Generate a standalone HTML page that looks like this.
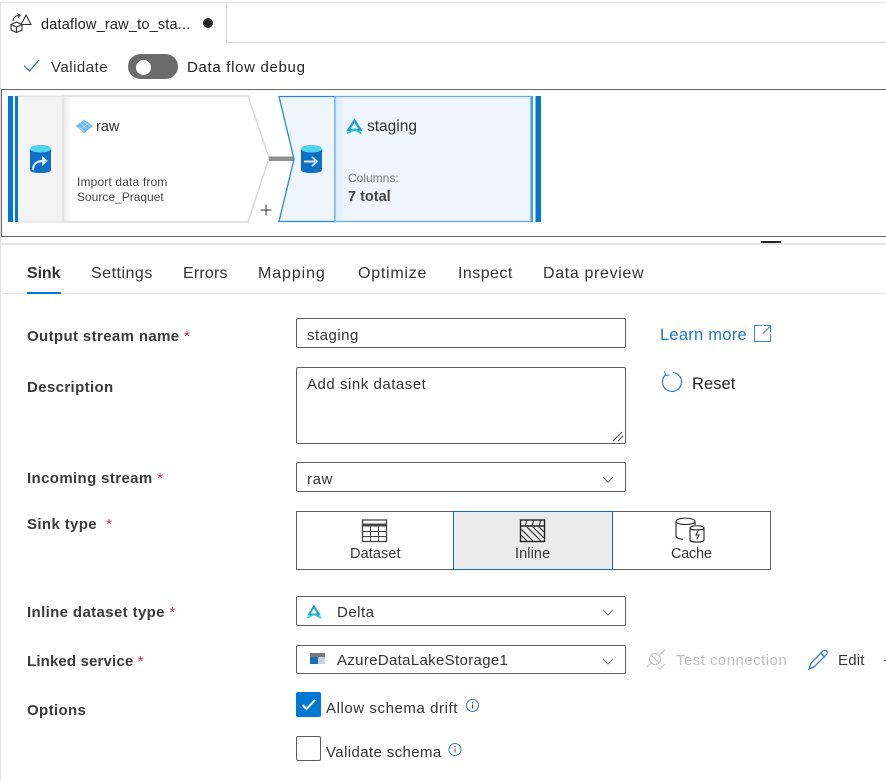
<!DOCTYPE html>
<html><head><meta charset="utf-8"><style>
html,body{margin:0;padding:0;background:#fff}
body{width:886px;height:780px;position:relative;overflow:hidden;font-family:"Liberation Sans",sans-serif;color:#1f1f1f}
.t{position:absolute;white-space:nowrap;font-size:15px;line-height:20px}
.b{font-weight:bold;font-size:15px;color:#3a3a3a;letter-spacing:.37px}
.r{color:#c4314b;font-weight:normal}
.tab{font-size:16px;color:#333}
.box{position:absolute;box-sizing:border-box;border:1px solid #605e5c;border-radius:2px;background:#fff}
.a{position:absolute}
svg{position:absolute;overflow:visible}
</style></head><body>
<div class="a" style="left:0;top:2px;width:886px;height:1px;background:#e1e1e1"></div>
<div class="a" style="left:0;top:2px;width:1px;height:778px;background:#e1e1e1"></div>
<div class="a" style="left:226px;top:3px;width:1px;height:39px;background:#d8d8d8"></div>
<div class="a" style="left:226px;top:42px;width:660px;height:1px;background:#d8d8d8"></div>
<svg style="left:0;top:0" width="40" height="40" fill="none" stroke="#333" stroke-width="1.100"><path d="M11 24.500l5.500-2.500 5.500 2.500v5.500l-5.500 2.500-5.500-2.500zM11 24.500l5.500 2.500 5.500-2.500M16.500 27v5.500M13 21c.2-3.500 2.500-5.500 6.500-5.500M17.500 13.500l2.500 2-2 2.500M26 15l-4.800 9.500h9.800z"/></svg>
<div class="t" style="left:41px;top:15px;font-size:14.500px;color:#222;letter-spacing:.2px">dataflow_raw_to_sta...</div>
<div class="a" style="left:203px;top:18px;width:10px;height:10px;border-radius:50%;background:#252423"></div>
<svg style="left:0;top:0" width="60" height="90" fill="none"><path d="M24 65.500l5.500 5.500 9.500-11" stroke="#3a6fc4" stroke-width="1.200"/></svg>
<div class="t" style="left:51px;top:58px;color:#333;letter-spacing:.5px">Validate</div>
<div class="a" style="left:128px;top:54px;width:50px;height:25px;border-radius:13px;background:#6b6b6b"></div>
<div class="a" style="left:135.500px;top:59.500px;width:15px;height:15px;border-radius:50%;background:#fff"></div>
<div class="t" style="left:187px;top:58px;color:#222;letter-spacing:.68px">Data flow debug</div>

<div class="a" style="left:1px;top:89px;width:885px;height:148px;box-sizing:border-box;border:1px solid #666;border-right:none"></div>
<div class="a" style="left:0;top:243px;width:886px;height:2px;background:#e3e3e3"></div>
<div class="a" style="left:761px;top:241px;width:20px;height:2px;background:#222"></div>

<svg style="left:0;top:0" width="560" height="240">
<defs><linearGradient id="g" x1="0" x2="1" y1="0" y2="0"><stop offset="0" stop-color="#ececec"/><stop offset="1" stop-color="#fff"/></linearGradient>
<linearGradient id="h" x1="0" x2="1" y1="0" y2="0"><stop offset="0" stop-color="#dceafa"/><stop offset="1" stop-color="#eef5fc"/></linearGradient></defs>
<path d="M63 96H248L269 158 248 222H63z" fill="#fff" stroke="#dadada" stroke-width="1.500"/>
<rect x="64" y="97" width="8" height="124" fill="url(#g)"/>
<rect x="17" y="96" width="46" height="126" fill="#f3f3f3" stroke="#dadada"/>
<rect x="8" y="96" width="5" height="126" fill="#0078d4"/>
<rect x="15" y="96" width="3" height="126" fill="#0078d4"/>
<rect x="269" y="156.500" width="25" height="4.500" fill="#8f8f8f"/>
<path d="M279 96.500H335V221.500H279L294 159z" fill="#eef5fc" stroke="#2b88d8" stroke-width="1.300"/>
<rect x="335" y="96.500" width="196" height="125" fill="#eef5fc" stroke="#6aaee8" stroke-width="1.300"/>
<rect x="336" y="97.500" width="9" height="123" fill="url(#h)"/>
<rect x="535.500" y="96" width="5.500" height="126" fill="#0078d4"/>
<rect x="530.500" y="96" width="2.500" height="126" fill="#4a9fe3"/>
<path d="M30 149c0-5 21-5 21 0v21c0 4-21 4-21 0z" fill="#0e6fc4"/>
<ellipse cx="40.500" cy="149" rx="10.500" ry="3.500" fill="#50d6ec"/>
<path d="M33 170c0-6 4-9 10-9" fill="none" stroke="#d5ecfb" stroke-width="2.200"/><path d="M42 156l6 5-6 5z" fill="#d5ecfb"/>
<path d="M301 149c0-5 21-5 21 0v21c0 4-21 4-21 0z" fill="#0e6fc4"/>
<ellipse cx="311.500" cy="149" rx="10.500" ry="3.500" fill="#50d6ec"/>
<path d="M304 161.500h11" stroke="#d5ecfb" stroke-width="2"/><path d="M312 157l5 4.500-5 4.500" fill="none" stroke="#d5ecfb" stroke-width="1.800"/>
<path d="M84 119.500l9 6.500-9 7-8-7z" fill="#6db9ee"/><path d="M79 122l8 6.500M82 120l8 6.500M81 129l7-5.500M84 131l-5-4" stroke="#bfe2f9" stroke-width=".7"/>
<path d="M354.500 120.500L360.500 130H348.500Z" fill="none" stroke="#1b9fd1" stroke-width="2.400"/><path d="M347 133c3 0 5-3.500 7.500-3.500s4.500 3.500 7 3.500" fill="none" stroke="#2fc0d3" stroke-width="1.800"/>
<path d="M260.500 210h11M266 204.500v11" stroke="#333" stroke-width="1"/>
</svg>
<div class="t" style="left:96px;top:117px;font-size:14.500px;color:#333">raw</div>
<div class="t" style="left:77px;top:175px;font-size:12px;line-height:14.500px;color:#444"><span style="letter-spacing:.15px">Import data from</span><br>Source_Praquet</div>
<div class="t" style="left:367px;top:117px;font-size:15.500px;color:#333">staging</div>
<div class="t" style="left:348px;top:169px;font-size:12px;line-height:18px;color:#777">Columns:</div>
<div class="t" style="left:348px;top:188px;font-size:14.500px;line-height:18px;font-weight:bold;color:#444">7 total</div>

<div class="a" style="left:2px;top:293px;width:884px;height:1px;background:#e1e1e1"></div>
<div class="a" style="left:27px;top:292px;width:34px;height:2px;background:#0078d4"></div>
<div class="t tab" style="left:27px;top:264px;font-weight:bold;letter-spacing:-.1px">Sink</div>
<div class="t tab" style="left:91px;top:264px;letter-spacing:.5px">Settings</div>
<div class="t tab" style="left:183px;top:264px;letter-spacing:.2px">Errors</div>
<div class="t tab" style="left:258px;top:264px;letter-spacing:.9px">Mapping</div>
<div class="t tab" style="left:358px;top:264px;letter-spacing:.75px">Optimize</div>
<div class="t tab" style="left:458px;top:264px;letter-spacing:.45px">Inspect</div>
<div class="t tab" style="left:543px;top:264px;letter-spacing:.65px">Data preview</div>

<div class="t b" style="left:27px;top:327px">Output stream name <span class="r">*</span></div>
<div class="t b" style="left:27px;top:378px">Description</div>
<div class="t b" style="left:27px;top:469px">Incoming stream <span class="r">*</span></div>
<div class="t b" style="left:27px;top:515px">Sink type &nbsp;<span class="r">*</span></div>
<div class="t b" style="left:27px;top:603px">Inline dataset type <span class="r">*</span></div>
<div class="t b" style="left:27px;top:652px;letter-spacing:.15px">Linked service <span class="r">*</span></div>
<div class="t b" style="left:27px;top:701px">Options</div>

<div class="box" style="left:296px;top:318px;width:330px;height:30px"></div>
<div class="t" style="left:307px;top:326px;color:#333;letter-spacing:.5px">staging</div>
<div class="box" style="left:296px;top:367px;width:330px;height:77px"></div>
<div class="t" style="left:307px;top:375px;color:#333;letter-spacing:.53px">Add sink dataset</div>
<svg style="left:0;top:0" width="886" height="780" fill="none">
<path d="M613 441l9-9M618 441l5-5" stroke="#444"/>
</svg>
<div class="box" style="left:296px;top:462px;width:330px;height:30px"></div>
<div class="t" style="left:307px;top:470px;color:#333;letter-spacing:.6px">raw</div>
<svg style="left:0;top:0" width="886" height="780" fill="none"><path d="M603 477l5 5 5-5" stroke="#777"/></svg>

<div class="t" style="left:660px;top:325px;font-size:16.500px;color:#1e78c8;letter-spacing:.25px">Learn more</div>
<svg style="left:0;top:0" width="886" height="780" fill="none">
<path d="M762 325.500h-7.500v16h16v-7.500M763 333.500l7.500-7.500M764 325.500h6.500v6.500" stroke="#3b86d6" stroke-width="1.100"/>
<path d="M673 372.500A9.500 9.500 0 1 1 665.500 375" stroke="#3b7fd0" stroke-width="1.300"/><path d="M664.500 371.500l1 4 4-.5" stroke="#3b7fd0" stroke-width="1.100"/>
</svg>
<div class="t" style="left:692px;top:374px;font-size:16.500px;color:#222;letter-spacing:.05px">Reset</div>

<div class="a" style="left:296px;top:511px;width:475px;height:59px;box-sizing:border-box;border:1px solid #605e5c"></div>
<div class="a" style="left:453px;top:511px;width:160px;height:59px;box-sizing:border-box;border:1px solid #0f6cbd;background:#ebebeb"></div>
<svg style="left:0;top:0" width="886" height="780" fill="none">
<rect x="362.500" y="520" width="24" height="21.500" stroke="#444" stroke-width="1.300"/>
<path d="M362 525h25" stroke="#444" stroke-width="3"/>
<path d="M362 531.500h25M362 536.500h25M370.500 526v15M378.500 526v15" stroke="#444"/>
<rect x="520.500" y="520" width="24" height="21.500" stroke="#222" stroke-width="1.400"/>
<path d="M520 526h25" stroke="#222" stroke-width="1.500"/>
<path d="M527 527l14 14M533 527l11 11M521 529l12 12M539 527l5 5M521 535l6 6M527 520l-2 6M534 520l-2 6M541 520l-2 6" stroke="#222" stroke-width="1.100"/>
<path d="M695 525v-3.500c0-4.500-19-4.500-19 0v14c0 2 2 3.500 7 3.800M676 521.500c0 4 19 4 19 0" stroke="#222" stroke-width="1.100"/>
<path d="M690 528c0-3 14-3 14 0v12c0 2.800-14 2.800-14 0zM690 528c0 2.600 14 2.600 14 0" stroke="#222" stroke-width="1.100" fill="#fff"/>
<path d="M698 531l-2 4h3l-2 4" stroke="#222" stroke-width="1"/>
</svg>
<div class="t" style="left:350px;top:544px;font-size:14.500px;color:#333;letter-spacing:.1px">Dataset</div>
<div class="t" style="left:515px;top:544px;font-size:14.500px;color:#333;letter-spacing:.1px">Inline</div>
<div class="t" style="left:671px;top:544px;font-size:14.500px;color:#333;letter-spacing:-.25px">Cache</div>

<div class="box" style="left:296px;top:596px;width:330px;height:30px"></div>
<div class="t" style="left:337px;top:603px;color:#333;letter-spacing:.5px">Delta</div>
<div class="box" style="left:296px;top:645px;width:330px;height:29px"></div>
<div class="t" style="left:337px;top:651px;color:#333;letter-spacing:.33px">AzureDataLakeStorage1</div>
<svg style="left:0;top:0" width="886" height="780" fill="none">
<path d="M603 610l5 5 5-5M603 659l5 5 5-5" stroke="#777"/>
<path d="M314 606.500L319 614.500H309Z" stroke="#1b9fd1" stroke-width="2"/><path d="M307 617.500c3 0 4.500-3 7-3s4 3 7 3" stroke="#2fc0d3" stroke-width="1.600"/>
<rect x="310" y="653" width="15" height="4" fill="#7a7a7a"/><rect x="310" y="657" width="15" height="7" fill="#c9d3dc"/><rect x="310" y="657" width="8" height="7" fill="#1a6fb5"/>
<circle cx="655" cy="659" r="5.500" stroke="#c4c4c4" stroke-width="1.200"/>
<path d="M647 667l4.500-4.500M651 655l8 8M658.500 655.500l6.500-5.500M657.500 667l2.500 2 5-5" stroke="#c4c4c4" stroke-width="1.200"/>
<path d="M809 669l2-6 12-12c1-1 2.500-1 3.500 0s1 2.500 0 3.500l-12 12zM809 669l5.500-2M821 653.500l4 4" stroke="#3b7fd0" stroke-width="1.300"/>
<path d="M884 660.500h2" stroke="#444"/>
</svg>
<div class="t" style="left:676px;top:651px;color:#c0bfbd;letter-spacing:.46px">Test connection</div>
<div class="t" style="left:838px;top:651px;color:#333;letter-spacing:.2px">Edit</div>

<div class="a" style="left:296px;top:692px;width:25px;height:25px;border-radius:2px;background:#0078d4"></div>
<svg style="left:0;top:0" width="886" height="780" fill="none">
<path d="M302.500 705l4 4 8.500-9" stroke="#fff" stroke-width="2"/>
<circle cx="472.500" cy="705.500" r="6" stroke="#3b7fd0"/><path d="M472.500 704.500v4M472.500 702v1.200" stroke="#444"/>
<circle cx="455" cy="749.500" r="6" stroke="#3b7fd0"/><path d="M455 748.500v4M455 746v1.200" stroke="#444"/>
</svg>
<div class="t" style="left:326px;top:699px;color:#333;letter-spacing:.57px">Allow schema drift</div>
<div class="a" style="left:296px;top:736px;width:25px;height:25px;box-sizing:border-box;border:1px solid #605e5c;border-radius:2px"></div>
<div class="t" style="left:326px;top:743px;color:#333;letter-spacing:.39px">Validate schema</div>
</body></html>
